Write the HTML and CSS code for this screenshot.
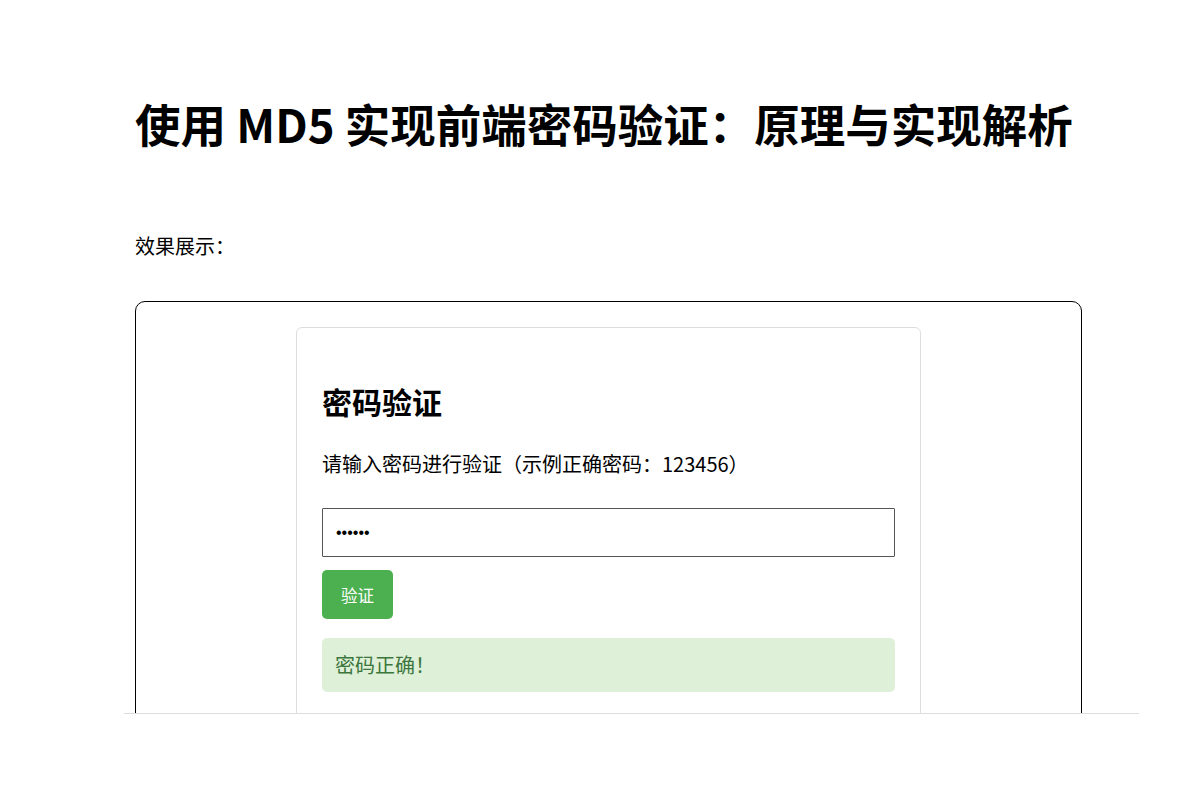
FILE: index.html
```html
<!DOCTYPE html>
<html lang="zh-CN">
<head>
<meta charset="utf-8">
<title>使用 MD5 实现前端密码验证：原理与实现解析</title>
<link rel="stylesheet" href="styles.css">
</head>
<body>
<div class="page">
  <h1 class="title">使用 MD5 实现前端密码验证：原理与实现解析</h1>
  <p class="lead">效果展示：</p>
  <div class="demo">
    <div class="card">
      <h2 class="card-title">密码验证</h2>
      <p class="card-text">请输入密码进行验证（示例正确密码：123456）</p>
      <input class="pwd" type="password" value="123456">
      <button class="btn" type="button">验证</button>
      <div class="msg">密码正确！</div>
    </div>
  </div>
</div>
</body>
</html>
```

FILE: styles.css
```css
html, body {
  margin: 0;
  padding: 0;
  background: #fff;
}
body {
  font-family: "Noto Sans CJK SC", "Open Sans", sans-serif;
  color: #000;
}
.page {
  margin-left: 124px;
  width: 1015px;
  height: 714px;
  box-sizing: border-box;
  padding-left: 11px;
  border-bottom: 1px solid #dddddd;
  overflow: hidden;
}
.title {
  margin: 96px 0 0 0;
  font-size: 45.5px;
  line-height: 54px;
  font-weight: 700;
  white-space: nowrap;
}
.lead {
  margin: 81px 0 0 0;
  font-size: 20px;
  line-height: 30px;
}
.demo {
  margin-top: 40px;
  width: 947px;
  box-sizing: border-box;
  border: 1px solid #000;
  border-radius: 10px;
  padding-top: 25px;
  height: 500px;
}
.card {
  width: 625px;
  box-sizing: border-box;
  margin: 0 auto;
  border: 1px solid #dddddd;
  border-radius: 6px;
  padding: 25px 25px 25px 25px;
}
.card-title {
  margin: 30px 0 0 0;
  font-size: 30px;
  line-height: 36px;
  font-weight: 700;
}
.card-text {
  margin: 30px 0 0 0;
  font-size: 20px;
  line-height: 30px;
}
.pwd {
  display: block;
  margin-top: 29px;
  width: 100%;
  height: 49px;
  box-sizing: border-box;
  border: 1px solid #555;
  border-radius: 1px;
  padding: 0 13px;
  font-family: "Liberation Sans", sans-serif;
  font-size: 16px;
  color: #000;
  outline: none;
}
.btn {
  display: block;
  margin-top: 13px;
  height: 49px;
  padding: 0 19px;
  border: none;
  border-radius: 5px;
  background: #4caf50;
  color: #fff;
  font-family: "Noto Sans CJK SC", sans-serif;
  font-size: 16.5px;
}
.msg {
  margin-top: 19px;
  height: 54px;
  box-sizing: border-box;
  padding: 0 13px;
  background: #dff0d8;
  color: #3c763d;
  border-radius: 5px;
  font-size: 20px;
  line-height: 54px;
}
```
